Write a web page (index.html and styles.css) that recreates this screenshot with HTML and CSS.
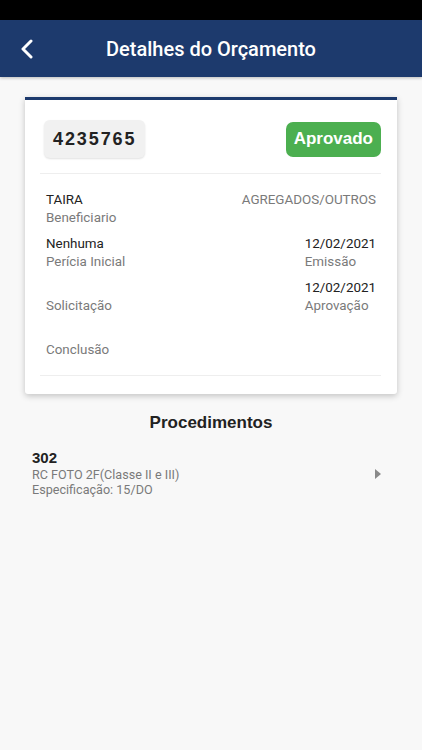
FILE: index.html
```html
<!DOCTYPE html>
<html lang="pt">

<head>
    <meta charset="UTF-8">
    <title>Detalhes do Orçamento</title>
    <link rel="stylesheet" href="styles.css">
</head>

<body>

    <div class="statusbar"></div>
    <header class="topbar">
        <button class="back" aria-label="Voltar">
            <svg width="14" height="20" viewBox="0 0 14 20">
                <path d="M11 2 L3 10 L11 18" fill="none" stroke="#fff" stroke-width="3" stroke-linecap="round" stroke-linejoin="round" />
            </svg>
        </button>
        <h1>Detalhes do Orçamento</h1>
        <span></span>
    </header>

    <div class="card">
        <div class="card-head">
            <div class="code">4235765</div>
            <div class="status">Aprovado</div>
        </div>

        <div class="fields">
            <div class="field">
                <div class="value">TAIRA</div>
                <div class="label">Beneficiario</div>
            </div>
            <div class="field right">
                <div class="label">AGREGADOS/OUTROS</div>
            </div>

            <div class="field">
                <div class="value">Nenhuma</div>
                <div class="label">Perícia Inicial</div>
            </div>
            <div class="field right">
                <div class="value">12/02/2021</div>
                <div class="label">Emissão</div>
            </div>

            <div class="field">
                <div class="value"></div>
                <div class="label">Solicitação</div>
            </div>
            <div class="field right">
                <div class="value">12/02/2021</div>
                <div class="label">Aprovação</div>
            </div>

            <div class="field">
                <div class="value"></div>
                <div class="label">Conclusão</div>
            </div>
            <div class="field right"></div>
        </div>
    </div>

    <h2 class="section-title">Procedimentos</h2>

    <div class="proc">
        <div class="proc-info">
            <div class="proc-code">302</div>
            <div class="proc-text">RC FOTO 2F(Classe II e III)</div>
            <div class="proc-text">Especificação: 15/DO</div>
        </div>
        <svg class="proc-arrow" width="6" height="10" viewBox="0 0 6 10">
            <path d="M0 0 L6 5 L0 10 Z" fill="#8a8a8a" />
        </svg>
    </div>

</body>

</html>
```

FILE: styles.css
```css
body {
    margin: 0;
    background: #f8f8f8;
    font-family: Roboto, "Liberation Sans", Arial, sans-serif;
    color: #222;
}

.statusbar {
    height: 20px;
    background: #000;
}

.topbar {
    height: 57px;
    background: #1d3a6d;
    display: grid;
    grid-template-columns: 56px 1fr 56px;
    align-items: center;
    box-shadow: 0 1px 3px rgba(0, 0, 0, 0.25);
}

.back {
    background: none;
    border: none;
    padding: 0 0 0 20px;
    height: 57px;
    display: flex;
    align-items: center;
    cursor: pointer;
}

.topbar h1 {
    margin: 0;
    text-align: center;
    color: #fff;
    font-size: 20px;
    font-weight: 500;
}

.card {
    margin: 20px 25px 0;
    background: #fff;
    border-top: 3px solid #1d3a6d;
    border-radius: 0 0 3px 3px;
    box-shadow: 0 2px 6px rgba(0, 0, 0, 0.22);
    padding: 0 16px 18px 15px;
}

.card-head {
    display: flex;
    justify-content: space-between;
    align-items: center;
    padding: 20px 0 15px;
    border-bottom: 1px solid #eee;
}

.code {
    margin-left: 4px;
    height: 38px;
    padding: 0 9px;
    display: flex;
    align-items: center;
    background: #f1f1f1;
    border-radius: 6px;
    box-shadow: 0 1px 2px rgba(0, 0, 0, 0.12);
    font-family: "Liberation Sans", Arial, sans-serif;
    font-weight: bold;
    font-size: 18px;
    letter-spacing: 1.9px;
    color: #222;
}

.status {
    height: 35px;
    padding: 0 8px;
    display: flex;
    align-items: center;
    background: #4caf50;
    border-radius: 7px;
    color: #fff;
    font-family: "Liberation Sans", Arial, sans-serif;
    font-weight: bold;
    font-size: 17px;
}

.fields {
    display: grid;
    grid-template-columns: 1fr auto;
    row-gap: 8px;
    padding: 17px 5px 16px 6px;
    border-bottom: 1px solid #eee;
}

.field.right {
    justify-self: end;
}

.value,
.label {
    font-size: 13.4px;
    line-height: 18px;
    min-height: 18px;
}

.value {
    color: #222;
}

.label {
    color: #7a7a7a;
}

.section-title {
    margin: 19px 0 0;
    text-align: center;
    font-family: "Liberation Sans", Arial, sans-serif;
    font-size: 17px;
    line-height: 20px;
    font-weight: bold;
    color: #222;
}

.proc {
    display: flex;
    align-items: center;
    justify-content: space-between;
    padding: 16px 41px 0 32px;
}

.proc-code {
    font-family: "Liberation Sans", Arial, sans-serif;
    font-weight: bold;
    font-size: 15px;
    line-height: 18px;
    color: #222;
}

.proc-text {
    font-size: 12.6px;
    line-height: 15px;
    color: #7a7a7a;
}

.proc-arrow {
    margin-top: 2px;
}
```
